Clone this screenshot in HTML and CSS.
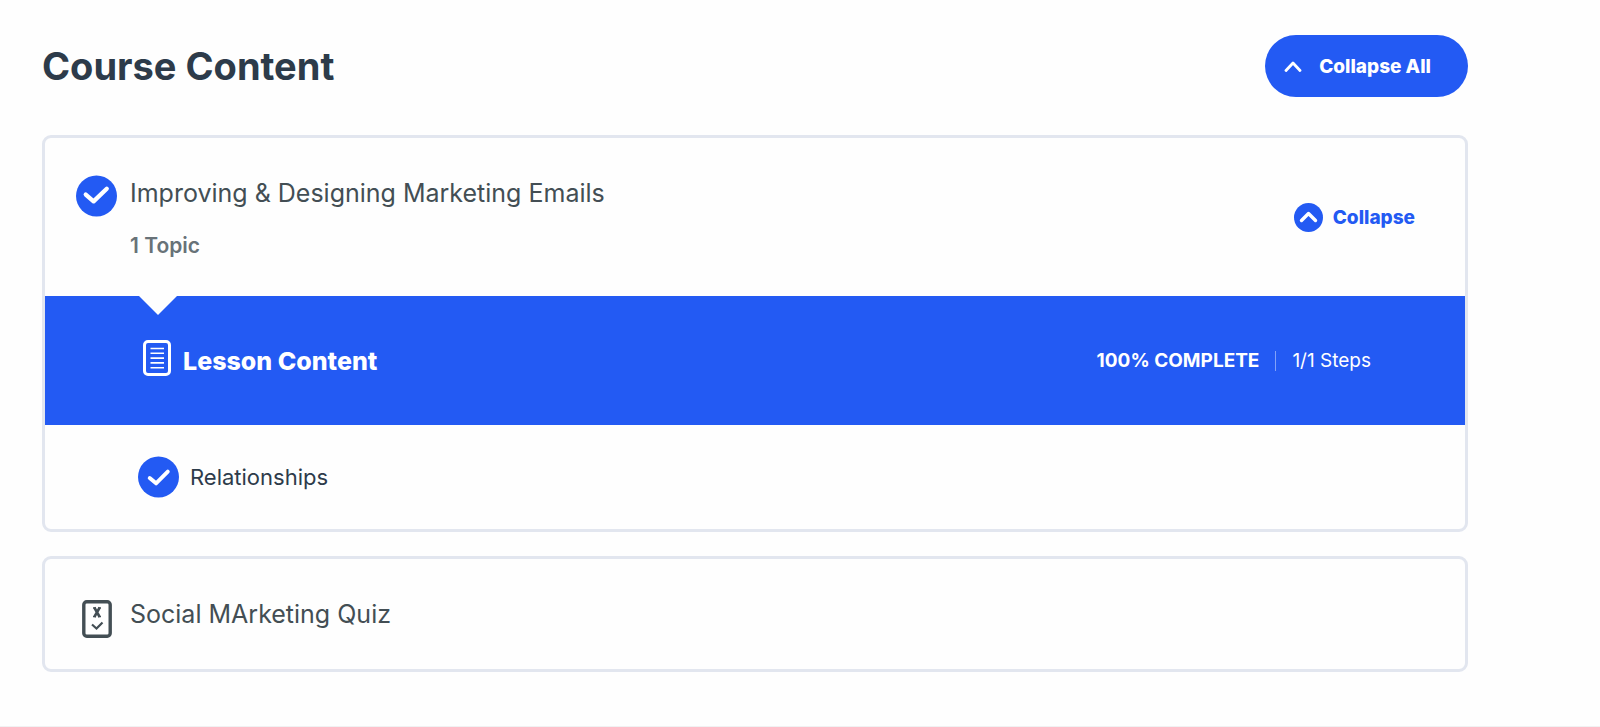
FILE: index.html
```html
<!DOCTYPE html>
<html lang="en">
<head>
    <meta charset="UTF-8">
    <meta name="viewport" content="width=device-width, initial-scale=1.0">
    <title>Course Content</title>
    <link rel="stylesheet" href="styles.css">
</head>
<body>
    <main class="course">
        <header class="course-header">
            <h1>Course Content</h1>
            <button class="collapse-all" id="collapse-all" type="button">
                <svg width="18" height="12" viewBox="0 0 18 12" fill="none" stroke="currentColor" stroke-width="2.8" stroke-linecap="round" stroke-linejoin="round">
                    <path d="M2 10.5 L9 3 L16 10.5"/>
                </svg>
                <span>Collapse All</span>
            </button>
        </header>

        <section class="card">
            <div class="lesson">
                <svg class="check" viewBox="0 0 42 42">
                    <circle cx="21" cy="21" r="21" fill="#235af3"/>
                    <path d="M10 19.5 L18 26.5 L31.5 13.5" fill="none" stroke="#fff" stroke-width="4.4" stroke-linecap="round" stroke-linejoin="round"/>
                </svg>
                <div class="lesson-info">
                    <a class="lesson-title" href="#">Improving &amp; Designing Marketing Emails</a>
                    <span class="topic-count">1 Topic</span>
                </div>
                <button class="collapse" id="collapse" type="button">
                    <svg width="29" height="29" viewBox="0 0 29 29">
                        <circle cx="14.5" cy="14.5" r="14.5" fill="#235af3"/>
                        <path d="M7.5 17.5 L14.5 10.5 L21.5 17.5" fill="none" stroke="#fff" stroke-width="3.4" stroke-linecap="round" stroke-linejoin="round"/>
                    </svg>
                    <span>Collapse</span>
                </button>
            </div>

            <div id="lesson-body">
                <div class="lesson-bar">
                    <svg width="28" height="36" viewBox="0 0 28 36" fill="none" stroke="#fff">
                        <rect x="1.5" y="1.5" width="25" height="33" rx="3.5" stroke-width="3"/>
                        <path d="M7.5 8.5 H21 M7.5 13.3 H21 M7.5 18.1 H21 M7.5 22.9 H21 M7.5 27.7 H21" stroke-width="1.6"/>
                    </svg>
                    <h2>Lesson Content</h2>
                    <div class="progress">
                        <strong>100% COMPLETE</strong>
                        <span class="steps">1/1 Steps</span>
                    </div>
                </div>
                <a class="topic" href="#">
                    <svg class="check" viewBox="0 0 42 42">
                        <circle cx="21" cy="21" r="21" fill="#235af3"/>
                        <path d="M12 22 L18.5 27.5 L30.5 15.5" fill="none" stroke="#fff" stroke-width="4" stroke-linecap="round" stroke-linejoin="round"/>
                    </svg>
                    <span>Relationships</span>
                </a>
            </div>
        </section>

        <section class="card quiz">
            <svg width="30" height="38" viewBox="0 0 30 38" fill="none" stroke="#434e54">
                <rect x="1.8" y="1.8" width="26.4" height="34.4" rx="3" stroke-width="3.4"/>
                <path d="M12.3 7.5 L17.7 17 M17.7 7.5 L12.3 17" stroke-width="2.6"/>
                <path d="M11 7.8 H13.8 M16.2 7.8 H19 M11 16.7 H13.8 M16.2 16.7 H19" stroke-width="1.2"/>
                <path d="M10 24.5 L14.5 28.5 L20.5 22.5" stroke-width="2.2"/>
            </svg>
            <a class="lesson-title" href="#">Social MArketing Quiz</a>
        </section>
    </main>
    <footer></footer>

    <script>
        const body = document.getElementById('lesson-body');

        function toggleLesson() {
            body.hidden = !body.hidden;
        }

        document.getElementById('collapse').addEventListener('click', toggleLesson);
        document.getElementById('collapse-all').addEventListener('click', toggleLesson);
    </script>
</body>
</html>
```
FILE: styles.css
```css
* {
    box-sizing: border-box;
}

body {
    margin: 0;
    background: #fefefe;
    font-family: Inter, "Liberation Sans", sans-serif;
    color: #2d3b4a;
}

h1,
h2 {
    margin: 0;
}

a {
    color: inherit;
    text-decoration: none;
}

button {
    display: flex;
    align-items: center;
    border: none;
    font-family: inherit;
    font-size: 19px;
    font-weight: 800;
    cursor: pointer;
}

svg {
    flex-shrink: 0;
}

.course {
    padding: 35px 132px 54px 42px;
}

.course-header {
    display: flex;
    justify-content: space-between;
    align-items: center;
    margin-bottom: 38px;
}

h1 {
    font-size: 38px;
    font-weight: 700;
    line-height: 46px;
}

.collapse-all {
    gap: 17px;
    height: 62px;
    padding: 0 37px 0 19px;
    border-radius: 31px;
    background: #235af3;
    color: #fff;
}

.card {
    margin-bottom: 24px;
    border: 3px solid #e2e6ef;
    border-radius: 9px;
}

.lesson {
    display: flex;
    align-items: flex-start;
    padding: 37px 50px 36px 31px;
}

.check {
    width: 41px;
    height: 42px;
}

.lesson-info {
    display: flex;
    flex-direction: column;
    flex: 1;
    gap: 21px;
    margin-left: 13px;
}

.lesson-title {
    color: #434e54;
    font-size: 25px;
    line-height: 36px;
}

.topic-count {
    color: #687278;
    font-size: 21px;
    font-weight: 600;
    line-height: 28px;
}

.collapse {
    align-self: center;
    gap: 10px;
    padding: 0;
    background: none;
    color: #235af3;
}

.lesson-bar {
    position: relative;
    display: flex;
    align-items: center;
    height: 129px;
    padding: 0 94px 0 98px;
    background: #235af3;
    color: #fff;
}

.lesson-bar svg {
    margin-bottom: 6px;
}

/* notch pointing down from the lesson above */
.lesson-bar::before {
    content: "";
    position: absolute;
    top: 0;
    left: 94px;
    border: 19px solid transparent;
    border-top-color: #fefefe;
    border-bottom: 0;
}

h2 {
    margin-left: 12px;
    font-size: 25px;
    font-weight: 800;
    line-height: 32px;
}

.progress {
    display: flex;
    align-items: center;
    margin-left: auto;
    font-size: 19px;
    line-height: 20px;
}

.steps {
    margin-left: 16px;
    padding-left: 16px;
    border-left: 1px solid #82a1f8;
}

.topic {
    display: flex;
    align-items: center;
    gap: 11px;
    padding: 31px 93px;
    font-size: 22px;
    line-height: 28px;
}

.quiz {
    display: flex;
    align-items: flex-start;
    gap: 18px;
    margin-bottom: 0;
    padding: 37px 37px 31px;
}

.quiz svg {
    margin-top: 4px;
}

footer {
    border-top: 1px solid #f1f1f2;
}
```
